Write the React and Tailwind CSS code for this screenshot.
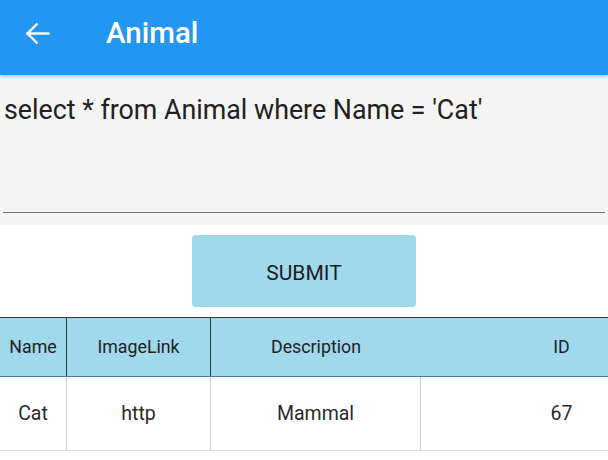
import { useState } from 'react';

const rows = [{ name: 'Cat', imageLink: 'http', description: 'Mammal', id: 67 }];

const App = () => {
    const [query, setQuery] = useState("select * from Animal where Name = 'Cat'");

    return (
        <div className="w-[608px] h-[460px] overflow-hidden bg-white font-['Roboto',sans-serif]">
            {/* App bar */}
            <div className="relative z-10 h-[75px] bg-[#2196f3] flex items-center pb-[8px] shadow-[0_2px_3px_rgba(0,0,0,0.18)]">
                <svg width="24" height="24" viewBox="0 0 24 24" className="ml-[26px]" fill="none" stroke="white" strokeWidth="2.4" strokeLinecap="square">
                    <path d="M1.5 11.5H22.5" />
                    <path d="M11.5 1.5L1.5 11.5L11.5 21.5" strokeLinecap="butt" />
                </svg>
                <h1 className="ml-[56px] text-[29.5px] font-medium text-white leading-none">Animal</h1>
            </div>

            {/* Query editor */}
            <div className="h-[150px] bg-[#f4f4f4] px-[3px] pt-[19px] flex flex-col">
                <textarea
                    value={query}
                    onChange={(e) => setQuery(e.target.value)}
                    className="flex-1 resize-none bg-transparent outline-none text-[26.8px] leading-[32px] text-[#212121] pl-px"
                />
                <div className="h-px bg-[#777] mb-[12px]" />
            </div>

            {/* Submit */}
            <div className="flex justify-center pt-[10px] pb-[10px]">
                <button className="w-[224px] h-[72px] rounded-[4px] bg-[#a0d8ec] pt-[5px] text-[21px] text-[#1d1d1d]">SUBMIT</button>
            </div>

            {/* Results table */}
            <div className="w-[702px]">
                <div className="flex h-[60px] bg-[#a0d8ec] border-t border-[#333] border-b border-b-[#4d7f88] text-[17.8px] text-[#222]">
                    <div className="w-[67px] flex items-center justify-center border-r border-[#333]">Name</div>
                    <div className="w-[144px] flex items-center justify-center border-r border-[#333]">ImageLink</div>
                    <div className="w-[210px] flex items-center justify-center">Description</div>
                    <div className="w-[281px] flex items-center justify-center">ID</div>
                </div>
                {rows.map((row) => (
                    <div key={row.id} className="flex h-[74px] border-b border-[#dcdcdc] text-[19.5px] text-[#2a2a2a]">
                        <div className="w-[67px] flex items-center justify-center pt-px border-r border-[#d0d0d0]">{row.name}</div>
                        <div className="w-[144px] flex items-center justify-center pt-px border-r border-[#d0d0d0]">{row.imageLink}</div>
                        <div className="w-[210px] flex items-center justify-center pt-px border-r border-[#d0d0d0]">{row.description}</div>
                        <div className="w-[281px] flex items-center justify-center pt-px">{row.id}</div>
                    </div>
                ))}
            </div>
        </div>
    );
};

export default App;
